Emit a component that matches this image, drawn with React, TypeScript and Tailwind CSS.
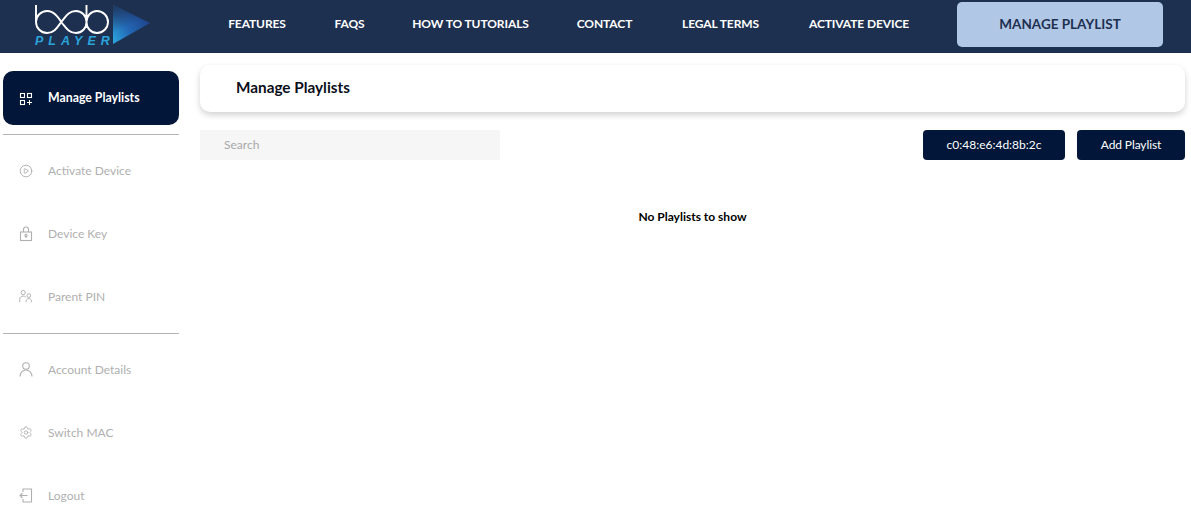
import type { ReactNode } from 'react';
import { CirclePlay, Settings } from 'lucide-react';

const navLinks = [
  { label: 'FEATURES', width: 'w-[58px]' },
  { label: 'FAQS', width: 'w-[31px]' },
  { label: 'HOW TO TUTORIALS', width: 'w-[115px]' },
  { label: 'CONTACT', width: 'w-[57px]' },
  { label: 'LEGAL TERMS', width: 'w-[79px]' },
  { label: 'ACTIVATE DEVICE', width: 'w-[102px]' },
];

function Logo() {
  return (
    <div className="relative w-[116px] h-[47px]">
      <svg width="116" height="47" viewBox="0 0 116 47" fill="none">
        <defs>
          <linearGradient id="play" x1="0" y1="1" x2="1" y2="0.35">
            <stop offset="0" stopColor="#2ba8e0" />
            <stop offset="0.45" stopColor="#2368b4" />
            <stop offset="1" stopColor="#1f3f88" />
          </linearGradient>
          <linearGradient id="shade" x1="0" y1="0" x2="0.45" y2="1">
            <stop offset="0" stopColor="#1e3050" stopOpacity="0.9" />
            <stop offset="0.6" stopColor="#1e3050" stopOpacity="0" />
          </linearGradient>
        </defs>
        <path
          d="M1 2 V19 C1 25 6 30 12 30 C20 30 23 23 27 18 C31 13 34 8 41 8 C47 8 51.5 13 51.5 19 C51.5 25 47 30 41 30 C34 30 31 25 27 20 C23 14 19 8 12 8 C6 8 1 13 1 19 M51.5 2 V19 C51.5 25 56 30 62 30 C68 30 73 25 73 19 C73 13 68 8 62 8 C56 8 51.5 13 51.5 19"
          stroke="#fff"
          strokeWidth="1.9"
        />
        <path d="M78 2 L115 20 L78 41 Z" fill="url(#play)" />
        <path d="M78 2 L115 20 L78 41 Z" fill="url(#shade)" />
      </svg>
      <span className="absolute left-0 top-[32px] text-[12.5px] leading-[13px] font-bold italic tracking-[5px] text-[#2ba3db] font-['Liberation_Sans',sans-serif]">
        PLAYER
      </span>
    </div>
  );
}

function GridPlusIcon() {
  return (
    <svg width="14" height="14" viewBox="0 0 14 14" fill="none" stroke="#fff" strokeWidth="1.1">
      <rect x="1.5" y="1.5" width="4" height="4" />
      <rect x="8.5" y="1.5" width="4" height="4" />
      <rect x="1.5" y="8.5" width="4" height="4" />
      <path d="M8 10.5h5M10.5 8v5" />
    </svg>
  );
}

function LockIcon() {
  return (
    <svg width="14" height="16" viewBox="0 0 14 16" fill="none" stroke="currentColor" strokeWidth="1.1">
      <rect x="1.5" y="6" width="11" height="8.5" />
      <path d="M4.5 6V3.5C4.5 2 5.6 1 7 1s2.5 1 2.5 2.5V6" />
      <circle cx="7" cy="9.5" r="1.1" />
      <path d="M7 10.5v1.5" />
    </svg>
  );
}

function ParentIcon() {
  return (
    <svg width="16" height="15" viewBox="0 0 16 15" fill="none" stroke="currentColor" strokeWidth="1.1">
      <circle cx="4.8" cy="3" r="2.4" />
      <path d="M0.8 14V10.5C0.8 8.5 2.5 7 4.8 7c1.2 0 2.2.4 3 1.2" />
      <circle cx="11.2" cy="6.5" r="2.1" />
      <path d="M8 14c0-2.3 1.4-4.5 3.2-4.5s3.3 2.2 3.3 4.5" />
    </svg>
  );
}

function PersonIcon() {
  return (
    <svg width="14" height="15" viewBox="0 0 14 15" fill="none" stroke="currentColor" strokeWidth="1.1">
      <circle cx="7" cy="4" r="3.3" />
      <path d="M1 14.5c0-3.6 2.6-6.5 6-6.5s6 2.9 6 6.5" />
    </svg>
  );
}

function LogoutIcon() {
  return (
    <svg width="14" height="15" viewBox="0 0 14 15" fill="none" stroke="currentColor" strokeWidth="1.1">
      <path d="M4 4V1h8.5v13H4v-3" />
      <path d="M8.5 7.5H1M3.5 5L1 7.5 3.5 10" />
    </svg>
  );
}

function SideItem({ icon, label }: { icon: ReactNode; label: string }) {
  return (
    <div className="h-[63px] flex items-center pl-4 gap-[15px] text-[#b0b0b0] text-[12px]">
      <span className="w-[14px] flex justify-center">{icon}</span>
      <span>{label}</span>
    </div>
  );
}

export default function App() {
  return (
    <div className="h-[516px] overflow-hidden bg-white font-['Lato',sans-serif]">
      <header className="h-[53px] bg-[#1e3050] flex items-start">
        <div className="ml-[35px] mt-[3px] w-[193px]">
          <Logo />
        </div>
        <nav className="flex items-center gap-12 h-[48px] text-[12px] font-bold tracking-[-0.1px] text-white">
          {navLinks.map((link) => (
            <a key={link.label} className={`${link.width} flex justify-center whitespace-nowrap`}>
              {link.label}
            </a>
          ))}
        </nav>
        <button className="ml-auto mr-[28px] mt-[2px] w-[206px] h-[45px] pb-[1px] rounded-[5px] bg-[#b1c7e6] text-[#1e3050] text-[13.5px] font-bold">
          MANAGE PLAYLIST
        </button>
      </header>

      <div className="flex">
        <aside className="ml-[3px] w-[176px] pt-[18px]">
          <div className="h-[54px] pt-[1px] rounded-[10px] bg-[#021639] flex items-center pl-4 gap-[15px] text-white text-[12.3px] font-bold">
            <span className="w-[14px] flex justify-center">
              <GridPlusIcon />
            </span>
            <span>Manage Playlists</span>
          </div>
          <div className="mt-[9px] border-t border-[#b4b4b4]" />
          <div className="pt-[4px]">
            <SideItem icon={<CirclePlay size={16} strokeWidth={1.6} />} label="Activate Device" />
            <SideItem icon={<LockIcon />} label="Device Key" />
            <SideItem icon={<ParentIcon />} label="Parent PIN" />
          </div>
          <div className="mt-[5px] border-t border-[#b4b4b4]" />
          <div className="pt-[4px]">
            <SideItem icon={<PersonIcon />} label="Account Details" />
            <SideItem icon={<Settings size={17} strokeWidth={1.5} />} label="Switch MAC" />
            <SideItem icon={<LogoutIcon />} label="Logout" />
          </div>
        </aside>

        <main className="ml-[21px] w-[985px] pt-[12px]">
          <div className="h-[47px] pb-[2px] rounded-[10px] bg-white shadow-[0_3px_6px_rgba(0,0,0,0.18)] flex items-center pl-9 text-[15.3px] font-bold text-[#0b0f1a]">
            Manage Playlists
          </div>
          <div className="mt-[18px] flex items-center">
            <div className="w-[300px] h-[30px] bg-[#f6f6f6] flex items-center pl-6 text-[12px] text-[#a9a9a9]">Search</div>
            <button className="ml-auto w-[142px] h-[30px] rounded-[4px] bg-[#021639] text-white text-[12px]">c0:48:e6:4d:8b:2c</button>
            <button className="ml-3 w-[108px] h-[30px] rounded-[4px] bg-[#021639] text-white text-[12px] tracking-[-0.1px]">Add Playlist</button>
          </div>
          <p className="mt-[48px] text-center text-[12px] font-bold text-black">No Playlists to show</p>
        </main>
      </div>
    </div>
  );
}
